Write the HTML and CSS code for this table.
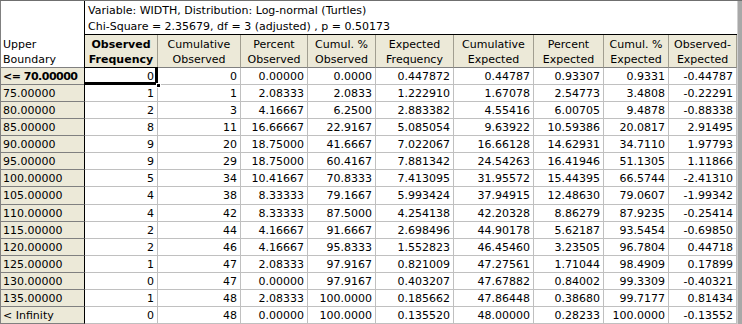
FILE: index.html
```html
<!DOCTYPE html>
<html>
<head>
<meta charset="utf-8">
<link rel="stylesheet" href="styles.css">
</head>
<body>
<div class="sheet">
<table class="grid">
<colgroup>
<col class="c0"><col class="c1"><col class="c2"><col class="c3"><col class="c4"><col class="c5"><col class="c6"><col class="c7"><col class="c8"><col class="c9">
</colgroup>
<thead>
<tr class="title-row">
<th class="corner" rowspan="2">Upper<br>Boundary</th>
<th class="title" colspan="9">Variable: WIDTH, Distribution: Log-normal (Turtles)<br>Chi-Square = 2.35679, df = 3 (adjusted) , p = 0.50173</th>
</tr>
<tr class="head-row">
<th class="colh active">Observed<br>Frequency</th>
<th class="colh">Cumulative<br>Observed</th>
<th class="colh">Percent<br>Observed</th>
<th class="colh">Cumul. %<br>Observed</th>
<th class="colh">Expected<br>Frequency</th>
<th class="colh">Cumulative<br>Expected</th>
<th class="colh">Percent<br>Expected</th>
<th class="colh">Cumul. %<br>Expected</th>
<th class="colh">Observed-<br>Expected</th>
</tr>
</thead>
<tbody>
<tr><th class="rowh active">&lt;= 70.00000</th><td class="sel">0</td><td>0</td><td>0.00000</td><td>0.0000</td><td>0.447872</td><td>0.44787</td><td>0.93307</td><td>0.9331</td><td>-0.44787</td></tr>
<tr><th class="rowh">75.00000</th><td>1</td><td>1</td><td>2.08333</td><td>2.0833</td><td>1.222910</td><td>1.67078</td><td>2.54773</td><td>3.4808</td><td>-0.22291</td></tr>
<tr><th class="rowh">80.00000</th><td>2</td><td>3</td><td>4.16667</td><td>6.2500</td><td>2.883382</td><td>4.55416</td><td>6.00705</td><td>9.4878</td><td>-0.88338</td></tr>
<tr><th class="rowh">85.00000</th><td>8</td><td>11</td><td>16.66667</td><td>22.9167</td><td>5.085054</td><td>9.63922</td><td>10.59386</td><td>20.0817</td><td>2.91495</td></tr>
<tr><th class="rowh">90.00000</th><td>9</td><td>20</td><td>18.75000</td><td>41.6667</td><td>7.022067</td><td>16.66128</td><td>14.62931</td><td>34.7110</td><td>1.97793</td></tr>
<tr><th class="rowh">95.00000</th><td>9</td><td>29</td><td>18.75000</td><td>60.4167</td><td>7.881342</td><td>24.54263</td><td>16.41946</td><td>51.1305</td><td>1.11866</td></tr>
<tr><th class="rowh">100.00000</th><td>5</td><td>34</td><td>10.41667</td><td>70.8333</td><td>7.413095</td><td>31.95572</td><td>15.44395</td><td>66.5744</td><td>-2.41310</td></tr>
<tr><th class="rowh">105.00000</th><td>4</td><td>38</td><td>8.33333</td><td>79.1667</td><td>5.993424</td><td>37.94915</td><td>12.48630</td><td>79.0607</td><td>-1.99342</td></tr>
<tr><th class="rowh">110.00000</th><td>4</td><td>42</td><td>8.33333</td><td>87.5000</td><td>4.254138</td><td>42.20328</td><td>8.86279</td><td>87.9235</td><td>-0.25414</td></tr>
<tr><th class="rowh">115.00000</th><td>2</td><td>44</td><td>4.16667</td><td>91.6667</td><td>2.698496</td><td>44.90178</td><td>5.62187</td><td>93.5454</td><td>-0.69850</td></tr>
<tr><th class="rowh">120.00000</th><td>2</td><td>46</td><td>4.16667</td><td>95.8333</td><td>1.552823</td><td>46.45460</td><td>3.23505</td><td>96.7804</td><td>0.44718</td></tr>
<tr><th class="rowh">125.00000</th><td>1</td><td>47</td><td>2.08333</td><td>97.9167</td><td>0.821009</td><td>47.27561</td><td>1.71044</td><td>98.4909</td><td>0.17899</td></tr>
<tr><th class="rowh">130.00000</th><td>0</td><td>47</td><td>0.00000</td><td>97.9167</td><td>0.403207</td><td>47.67882</td><td>0.84002</td><td>99.3309</td><td>-0.40321</td></tr>
<tr><th class="rowh">135.00000</th><td>1</td><td>48</td><td>2.08333</td><td>100.0000</td><td>0.185662</td><td>47.86448</td><td>0.38680</td><td>99.7177</td><td>0.81434</td></tr>
<tr><th class="rowh">&lt; Infinity</th><td>0</td><td>48</td><td>0.00000</td><td>100.0000</td><td>0.135520</td><td>48.00000</td><td>0.28233</td><td>100.0000</td><td>-0.13552</td></tr>
</tbody>
</table>
<div class="edge"></div>
</div>
</body>
</html>
```

FILE: styles.css
```css
html, body {
  margin: 0;
  padding: 0;
  background: #ffffff;
}

.sheet {
  display: flex;
  width: 742px;
  height: 324px;
  border-top: 1px solid #6f6f6f;
  box-sizing: border-box;
  overflow: hidden;
  font-family: "DejaVu Sans", "Liberation Sans", sans-serif;
  font-size: 11px;
  color: #000;
}

.grid {
  border-collapse: separate;
  border-spacing: 0;
  table-layout: fixed;
  width: 737px;
  flex: none;
}

.c0 { width: 85px; }
.c1 { width: 73px; }
.c2 { width: 83px; }
.c3 { width: 67px; }
.c4 { width: 68px; }
.c5 { width: 78px; }
.c6 { width: 80px; }
.c7 { width: 70px; }
.c8 { width: 65px; }
.c9 { width: 68px; }

.grid th, .grid td {
  box-sizing: border-box;
  padding: 0;
  white-space: nowrap;
  overflow: hidden;
  font-weight: normal;
}

.corner {
  background: #fff;
  text-align: left;
  vertical-align: bottom;
  line-height: 15px;
  padding: 0 0 0 2px !important;
  border-right: 1px solid #000;
  border-bottom: 1px solid #808080;
  border-left: 1px solid #808080;
}

.title {
  background: #fff;
  text-align: left;
  vertical-align: top;
  line-height: 15.5px;
  padding: 2px 0 0 3px !important;
  height: 34px;
  border-bottom: 1px solid #000;
}

.colh {
  background: #ece9d8;
  text-align: center;
  vertical-align: top;
  line-height: 15px;
  height: 33px;
  padding-top: 2px !important;
  border-right: 1px solid #a19e90;
  border-bottom: 1px solid #808080;
}

.colh.active,
.rowh.active {
  font-weight: bold;
}

.rowh {
  background: #ece9d8;
  text-align: left;
  height: 17px;
  line-height: 14px;
  padding: 2px 0 0 2px !important;
  border-left: 1px solid #808080;
  border-right: 1px solid #000;
  border-bottom: 1px solid #808080;
}

.rowh.active {
  letter-spacing: -0.5px;
}

.grid td {
  background: #fff;
  text-align: right;
  height: 17px;
  line-height: 14px;
  padding: 2px 3px 0 0;
  border-right: 1px solid #c0c0c0;
  border-bottom: 1px solid #c0c0c0;
}

.grid td.sel {
  position: relative;
  overflow: visible;
}

.grid td.sel::before {
  content: "";
  position: absolute;
  left: -1px;
  top: -1px;
  right: -1px;
  bottom: -1px;
  border: 1px solid #000;
  border-right-width: 3px;
  border-bottom-width: 3px;
}

.grid td.sel::after {
  content: "";
  position: absolute;
  right: -4px;
  bottom: -4px;
  width: 5px;
  height: 5px;
  background: #000;
  border: 1px solid #fff;
  box-sizing: border-box;
}

.edge {
  flex: none;
  width: 5px;
  background: #a8a8a8;
  border-left: 1px solid #d0d0d0;
  box-sizing: border-box;
}
```
